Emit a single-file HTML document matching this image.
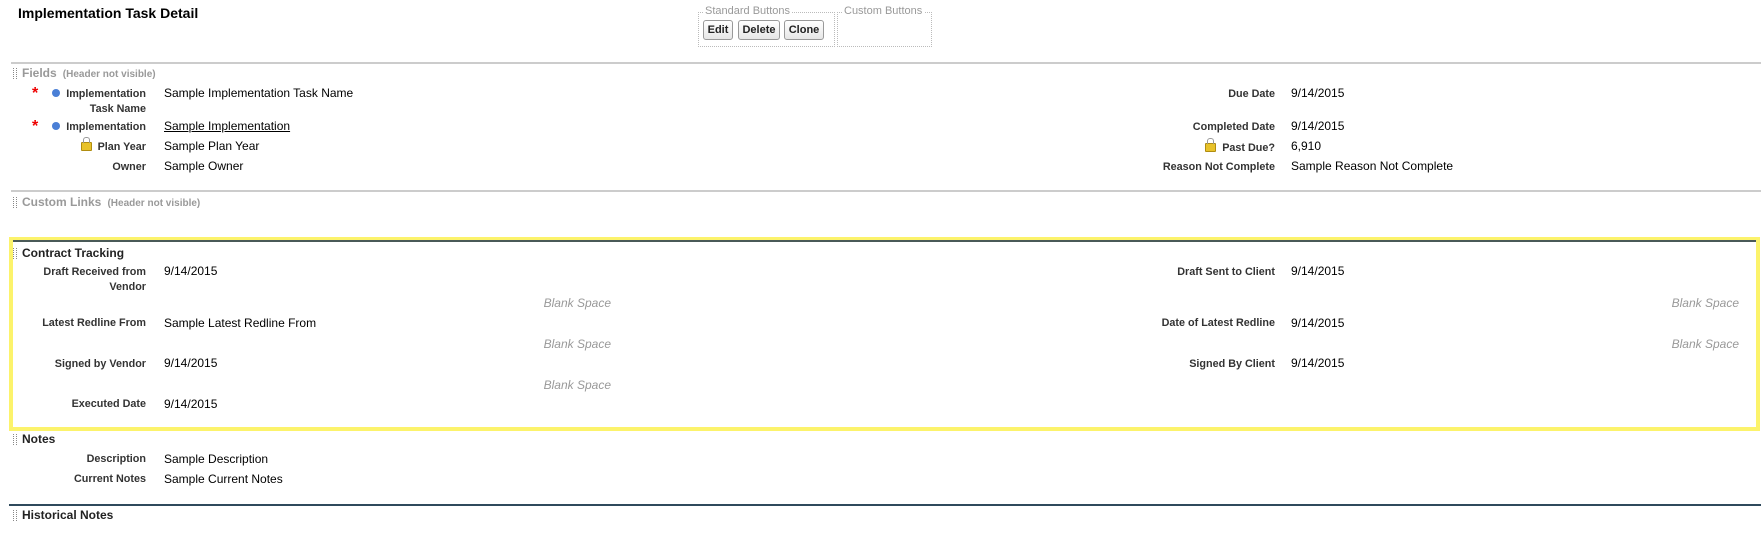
<!DOCTYPE html>
<html><head><meta charset="utf-8"><style>
body{margin:0;width:1761px;height:550px;background:#fff;font-family:"Liberation Sans",Arial,sans-serif;position:relative;overflow:hidden;color:#000}
.a{position:absolute;white-space:nowrap}
.l{position:absolute;font-size:10.8px;font-weight:bold;color:#333;text-align:right;line-height:15px}
.v{position:absolute;font-size:12px;color:#000;line-height:15px}
.h{position:absolute;font-size:12px;font-weight:bold;color:#222}
.g{color:#999}
.g small{font-size:10px}
.grip{position:absolute;width:2px;height:11px;border-left:1px dotted #888;border-right:1px dotted #888;}
.bs{position:absolute;font-size:12px;font-style:italic;color:#999;text-align:right}
.btn{position:absolute;top:20px;height:18px;border:1px solid #999;border-radius:3px;background:linear-gradient(#fff,#e6e6e6);font-size:11px;font-weight:bold;line-height:18px;text-align:center;color:#222}
.lock{display:inline-block;width:9px;height:7px;background:#e8c22a;border:1px solid #b08d10;border-radius:1px;position:relative;margin-right:6px;vertical-align:-1px}
.lock:before{content:"";position:absolute;left:1px;top:-6px;width:5px;height:5px;border:1px solid #999;border-bottom:none;border-radius:3px 3px 0 0}
</style></head><body>
<div class="a" style="left:18px;top:5px;font-size:14px;font-weight:bold">Implementation Task Detail</div>

<div class="a" style="left:698px;top:12px;width:135px;height:33px;border:1px dotted #bbb"></div>
<div class="a" style="left:703px;top:5px;font-size:11px;color:#999;background:#fff;padding:0 2px">Standard Buttons</div>
<div class="a" style="left:837px;top:12px;width:93px;height:33px;border:1px dotted #bbb"></div>
<div class="a" style="left:842px;top:5px;font-size:11px;color:#999;background:#fff;padding:0 2px">Custom Buttons</div>
<div class="btn" style="left:703px;width:28px">Edit</div>
<div class="btn" style="left:738px;width:40px">Delete</div>
<div class="btn" style="left:784px;width:38px">Clone</div>

<div class="a" style="left:11px;top:62px;width:1750px;height:2px;background:#ccc"></div>
<div class="grip" style="left:13px;top:68px"></div>
<div class="h g" style="left:22px;top:66px">Fields <small>&nbsp;(Header not visible)</small></div>

<div class="a" style="left:32px;top:85px;color:#e00;font-size:16px;font-weight:bold">*</div>
<div class="a" style="left:52px;top:89px;width:8px;height:8px;border-radius:50%;background:#4a7fd6"></div>
<div class="l" style="left:0;width:146px;top:87px">Implementation<br>Task Name</div>
<div class="v" style="left:164px;top:86px">Sample Implementation Task Name</div>
<div class="a" style="left:32px;top:118px;color:#e00;font-size:16px;font-weight:bold">*</div>
<div class="a" style="left:52px;top:122px;width:8px;height:8px;border-radius:50%;background:#4a7fd6"></div>
<div class="l" style="left:0;width:146px;top:120px">Implementation</div>
<div class="v" style="left:164px;top:119px;text-decoration:underline">Sample Implementation</div>
<div class="l" style="left:0;width:146px;top:140px"><span class="lock"></span>Plan Year</div>
<div class="v" style="left:164px;top:139px">Sample Plan Year</div>
<div class="l" style="left:0;width:146px;top:160px">Owner</div>
<div class="v" style="left:164px;top:159px">Sample Owner</div>

<div class="l" style="left:1000px;width:275px;top:87px">Due Date</div>
<div class="v" style="left:1291px;top:86px">9/14/2015</div>
<div class="l" style="left:1000px;width:275px;top:120px">Completed Date</div>
<div class="v" style="left:1291px;top:119px">9/14/2015</div>
<div class="l" style="left:1000px;width:275px;top:141px"><span class="lock"></span>Past Due?</div>
<div class="v" style="left:1291px;top:139px">6,910</div>
<div class="l" style="left:1000px;width:275px;top:160px">Reason Not Complete</div>
<div class="v" style="left:1291px;top:159px">Sample Reason Not Complete</div>

<div class="a" style="left:11px;top:190px;width:1750px;height:2px;background:#ccc"></div>
<div class="grip" style="left:13px;top:197px"></div>
<div class="h g" style="left:22px;top:195px">Custom Links <small>&nbsp;(Header not visible)</small></div>

<div class="a" style="left:9px;top:237px;width:1743px;height:186px;border:4px solid #fcf36b"></div>
<div class="a" style="left:13px;top:240px;width:1743px;height:2px;background:#4a5a58"></div>
<div class="grip" style="left:13px;top:248px"></div>
<div class="h" style="left:22px;top:246px">Contract Tracking</div>
<div class="l" style="left:0;width:146px;top:265px">Draft Received from<br>Vendor</div>
<div class="v" style="left:164px;top:264px">9/14/2015</div>
<div class="bs" style="left:400px;width:211px;top:296px">Blank Space</div>
<div class="l" style="left:0;width:146px;top:316px">Latest Redline From</div>
<div class="v" style="left:164px;top:316px">Sample Latest Redline From</div>
<div class="bs" style="left:400px;width:211px;top:337px">Blank Space</div>
<div class="l" style="left:0;width:146px;top:357px">Signed by Vendor</div>
<div class="v" style="left:164px;top:356px">9/14/2015</div>
<div class="bs" style="left:400px;width:211px;top:378px">Blank Space</div>
<div class="l" style="left:0;width:146px;top:397px">Executed Date</div>
<div class="v" style="left:164px;top:397px">9/14/2015</div>

<div class="l" style="left:1000px;width:275px;top:265px">Draft Sent to Client</div>
<div class="v" style="left:1291px;top:264px">9/14/2015</div>
<div class="bs" style="left:1500px;width:239px;top:296px">Blank Space</div>
<div class="l" style="left:1000px;width:275px;top:316px">Date of Latest Redline</div>
<div class="v" style="left:1291px;top:316px">9/14/2015</div>
<div class="bs" style="left:1500px;width:239px;top:337px">Blank Space</div>
<div class="l" style="left:1000px;width:275px;top:357px">Signed By Client</div>
<div class="v" style="left:1291px;top:356px">9/14/2015</div>

<div class="grip" style="left:13px;top:434px"></div>
<div class="h" style="left:22px;top:432px">Notes</div>
<div class="l" style="left:0;width:146px;top:452px">Description</div>
<div class="v" style="left:164px;top:452px">Sample Description</div>
<div class="l" style="left:0;width:146px;top:472px">Current Notes</div>
<div class="v" style="left:164px;top:472px">Sample Current Notes</div>

<div class="a" style="left:9px;top:504px;width:1752px;height:2px;background:#2f4a5c"></div>
<div class="grip" style="left:13px;top:510px"></div>
<div class="h" style="left:22px;top:508px">Historical Notes</div>
</body></html>
